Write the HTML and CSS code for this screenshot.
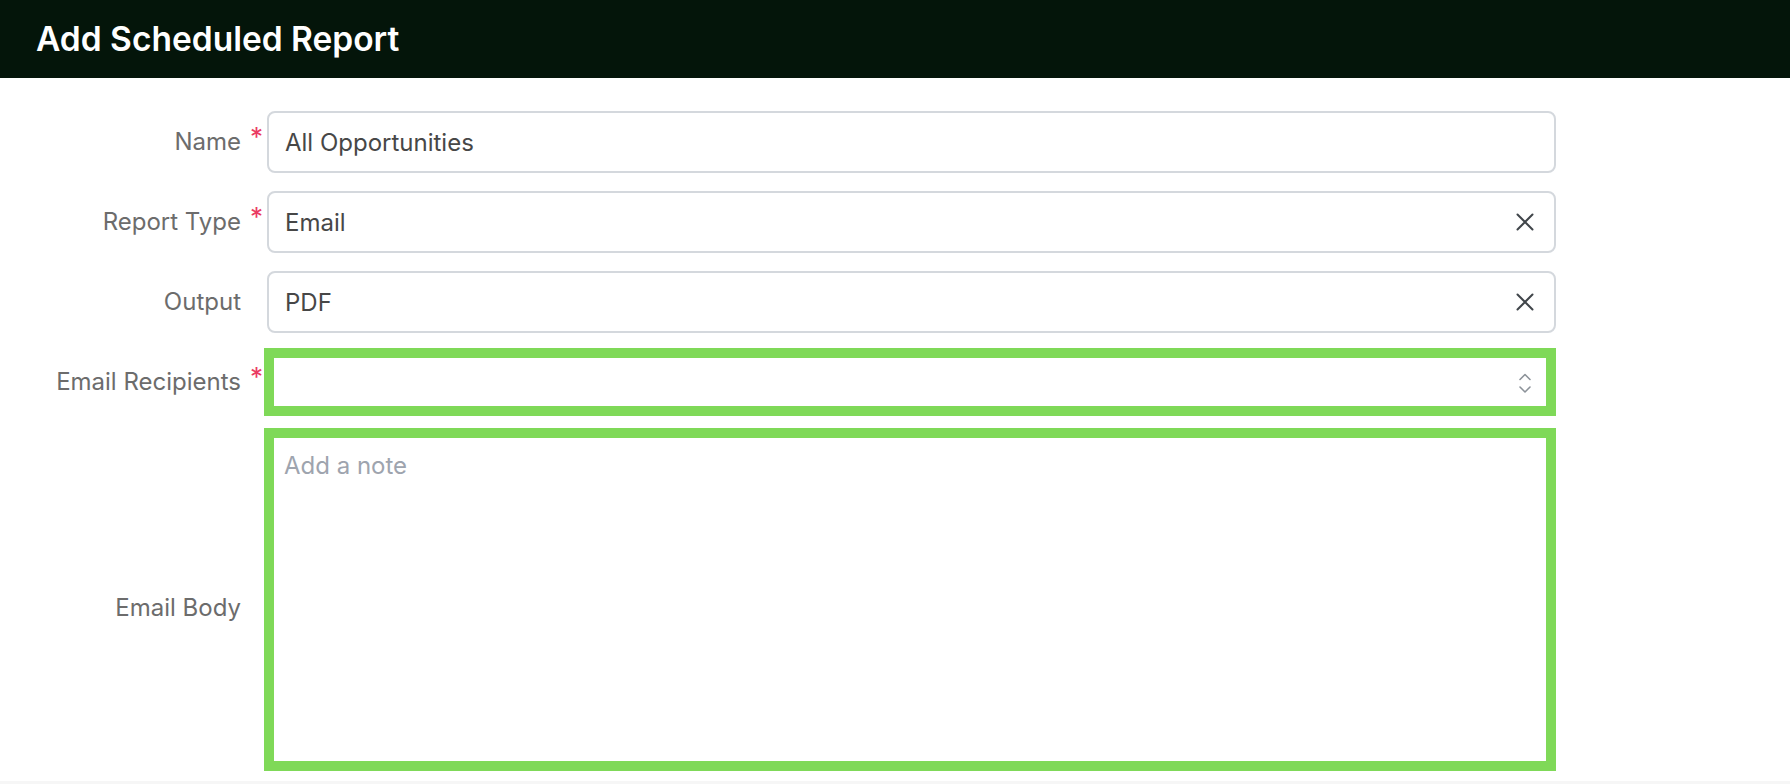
FILE: index.html
```html
<!DOCTYPE html>
<html lang="en">
<head>
<meta charset="utf-8">
<title>Add Scheduled Report</title>
<link rel="stylesheet" href="styles.css">
</head>
<body>
<header class="title-bar">
  <h1 class="title">Add Scheduled Report</h1>
</header>
<main class="form">
  <div class="row row--first">
    <div class="label-cell"><span class="label">Name</span><span class="req">*</span></div>
    <div class="field">
      <div class="input"><span class="value">All Opportunities</span></div>
    </div>
  </div>
  <div class="row">
    <div class="label-cell"><span class="label">Report Type</span><span class="req">*</span></div>
    <div class="field">
      <div class="input">
        <span class="value">Email</span>
        <svg class="icon-clear" viewBox="0 0 18 18" width="18" height="18"><path d="M1.5 1.5 L16.5 16.5 M16.5 1.5 L1.5 16.5" /></svg>
      </div>
    </div>
  </div>
  <div class="row">
    <div class="label-cell"><span class="label">Output</span><span class="req req--none">*</span></div>
    <div class="field">
      <div class="input">
        <span class="value">PDF</span>
        <svg class="icon-clear" viewBox="0 0 18 18" width="18" height="18"><path d="M1.5 1.5 L16.5 16.5 M16.5 1.5 L1.5 16.5" /></svg>
      </div>
    </div>
  </div>
  <div class="row row--recipients">
    <div class="label-cell"><span class="label">Email Recipients</span><span class="req">*</span></div>
    <div class="highlight highlight--select">
      <span class="value"></span>
      <svg class="icon-updown" viewBox="0 0 14 22" width="14" height="22"><path d="M2 7.5 L7 2.5 L12 7.5 M2 15 L7 20 L12 15" /></svg>
    </div>
  </div>
  <div class="row row--body">
    <div class="label-cell label-cell--tall"><span class="label">Email Body</span><span class="req req--none">*</span></div>
    <div class="highlight highlight--area">
      <span class="placeholder">Add a note</span>
    </div>
  </div>
</main>
<footer class="footer"></footer>
</body>
</html>
```
FILE: styles.css
```css
* { box-sizing: border-box; }
html, body { margin: 0; padding: 0; }
body {
  width: 1790px;
  height: 784px;
  overflow: hidden;
  background: #ffffff;
  font-family: Inter, "Noto Sans", "Liberation Sans", sans-serif;
  display: flex;
  flex-direction: column;
}
.title-bar {
  height: 78px;
  background: #04150a;
  display: flex;
  align-items: center;
  padding-left: 36px;
  flex: 0 0 auto;
}
.title {
  margin: 0;
  color: #ffffff;
  font-size: 33.5px;
  font-weight: 600;
  letter-spacing: 0;
  line-height: 1;
  padding-top: 1px;
}
.form {
  flex: 1 1 auto;
  display: flex;
  flex-direction: column;
  padding-top: 33px;
}
.row {
  display: grid;
  grid-template-columns: 264px 1292px;
  height: 62px;
  margin-top: 18px;
}
.row--first { margin-top: 0; }
.row--recipients { height: 68px; margin-top: 15px; }
.row--body { height: 343px; margin-top: 12px; }
.label-cell {
  display: flex;
  justify-content: flex-end;
  align-items: center;
  padding-right: 2px;
}
.label-cell--tall { padding-top: 16px; }
.label {
  color: #6c6c6c;
  font-size: 24px;
  line-height: 30px;
  white-space: nowrap;
}
.req {
  color: #ea3b62;
  font-size: 26px;
  line-height: 20px;
  width: 12px;
  margin-left: 9px;
  margin-bottom: 10px;
  text-align: center;
}
.req--none { visibility: hidden; }
.field { display: flex; }
.input {
  flex: 1 1 auto;
  margin-left: 3px;
  height: 62px;
  border: 2px solid #d4d8dd;
  border-radius: 8px;
  background: #fff;
  display: flex;
  align-items: center;
  padding: 0 20px 0 16px;
}
.value {
  flex: 1 1 auto;
  color: #474747;
  font-size: 24px;
  line-height: 30px;
  padding-top: 2px;
}
.icon-clear {
  flex: 0 0 auto;
  fill: none;
  stroke: #40454a;
  stroke-width: 2;
  stroke-linecap: round;
}
.highlight {
  border: 10px solid #7fd958;
  background: #fff;
}
.highlight--select {
  display: flex;
  align-items: center;
  padding-right: 14px;
}
.icon-updown {
  flex: 0 0 auto;
  fill: none;
  stroke: #8c9299;
  stroke-width: 1.6;
  stroke-linecap: round;
  stroke-linejoin: round;
  margin-top: 1px;
}
.highlight--area {
  padding: 13px 10px;
}
.placeholder {
  display: block;
  color: #9ea4ae;
  font-size: 24px;
  line-height: 30px;
}
.footer {
  height: 3px;
  background: #f6f6f6;
  flex: 0 0 auto;
}
```
